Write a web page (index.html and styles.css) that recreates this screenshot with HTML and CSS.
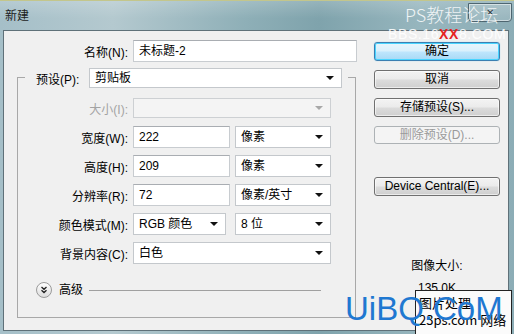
FILE: index.html
```html
<!DOCTYPE html>
<html lang="zh-CN">

<head>
    <meta charset="UTF-8">
    <meta name="viewport" content="width=device-width, initial-scale=1.0">
    <link rel="stylesheet" href="styles.css">
    <title>新建</title>
</head>

<body>
    <div class="window">
        <div class="titlebar">
            <span class="title">新建</span>
            <span class="close">✕</span>
        </div>
        <div class="frame">
            <div class="main">
                <div class="row first">
                    <span class="lbl wide-lbl">名称(N):</span>
                    <div class="input name">未标题-2</div>
                </div>
                <div class="group">
                    <div class="group-head">
                        <span class="head-lbl">预设(P):</span>
                        <div class="select preset">剪贴板</div>
                    </div>
                    <div class="row size">
                        <span class="lbl dim">大小(I):</span>
                        <div class="select disabled full"></div>
                    </div>
                    <div class="row">
                        <span class="lbl">宽度(W):</span>
                        <div class="input num">222</div>
                        <div class="select unit">像素</div>
                    </div>
                    <div class="row">
                        <span class="lbl">高度(H):</span>
                        <div class="input num">209</div>
                        <div class="select unit">像素</div>
                    </div>
                    <div class="row">
                        <span class="lbl">分辨率(R):</span>
                        <div class="input num">72</div>
                        <div class="select unit">像素/英寸</div>
                    </div>
                    <div class="row">
                        <span class="lbl">颜色模式(M):</span>
                        <div class="select mode">RGB 颜色</div>
                        <div class="select unit bits">8 位</div>
                    </div>
                    <div class="row">
                        <span class="lbl">背景内容(C):</span>
                        <div class="select full">白色</div>
                    </div>
                    <div class="advanced">
                        <span class="adv-icon">
                            <svg width="16" height="16" viewBox="0 0 16 16">
                                <defs>
                                    <linearGradient id="g" x1="0" y1="0" x2="0" y2="1">
                                        <stop offset="0" stop-color="#ffffff" />
                                        <stop offset="1" stop-color="#dcdcdc" />
                                    </linearGradient>
                                </defs>
                                <circle cx="8" cy="8" r="7.5" fill="url(#g)" stroke="#9a9a9a" />
                                <path d="M5.5 5 L8 7.3 L10.5 5 M5.5 8.3 L8 10.6 L10.5 8.3" fill="none" stroke="#222" stroke-width="1.3" />
                            </svg>
                        </span>
                        <span class="adv-lbl">高级</span>
                        <span class="adv-line"></span>
                    </div>
                </div>
            </div>
            <div class="side">
                <div class="btn default">确定</div>
                <div class="btn">取消</div>
                <div class="btn">存储预设(S)...</div>
                <div class="btn off">删除预设(D)...</div>
                <div class="btn central">Device Central(E)...</div>
                <div class="img-size">图像大小:</div>
                <div class="img-value">135.0K</div>
            </div>
        </div>

        <div class="wm-ps">PS教程论坛</div>
        <div class="wm-bbs">BBS.16<span class="red">XX</span>8.COM</div>
        <div class="wm-box">图片处理<br>23ps.com 网络</div>
        <div class="wm-uibq">UiBQ.CoM</div>
    </div>
</body>

</html>
```

FILE: styles.css
```css
* {
    margin: 0;
    padding: 0;
    box-sizing: border-box;
}

body {
    font-family: "Liberation Sans", "Noto Sans CJK SC", sans-serif;
    font-size: 12px;
    color: #000;
    overflow: hidden;
}

.window {
    position: relative;
    width: 514px;
    height: 334px;
    overflow: hidden;
    background: linear-gradient(90deg, #a5bfc8 0%, #b4c9cf 22%, #8eafb7 48%, #7fa3ac 62%, #97b6be 82%, #8cadb6 100%);
    border-top: 1px solid #c3c68c;
}

.titlebar {
    height: 29px;
    display: flex;
    justify-content: space-between;
    align-items: flex-start;
    background: linear-gradient(180deg, rgba(255, 255, 255, 0.18), rgba(255, 255, 255, 0) 60%);
}

.title {
    margin: 7px 0 0 5px;
    line-height: 16px;
    color: #1c1c1c;
}

.close {
    width: 44px;
    height: 19px;
    margin: 2px 2px 0 0;
    border: 1px solid #4e6670;
    border-radius: 0 0 4px 4px;
    box-shadow: inset 0 0 0 1px rgba(255, 255, 255, 0.5);
    background: rgba(255, 255, 255, 0.12);
    color: #2c3a40;
    font-size: 10px;
    line-height: 17px;
    text-align: center;
    text-shadow: 0 0 2px #fff;
}

.frame {
    display: flex;
    width: 506px;
    height: 301px;
    margin-left: 3px;
    border: 1px solid #5f7179;
    background: #f0f0f0;
}

.main {
    width: 362px;
    padding-top: 9px;
}

.row {
    display: flex;
    align-items: center;
    height: 22px;
    margin-top: 7px;
}

.row.first {
    margin-top: 0;
}

.lbl {
    width: 110px;
    margin-right: 5px;
    text-align: right;
    white-space: nowrap;
}

.wide-lbl {
    width: 124px;
}

.dim {
    color: #a3a3a3;
}

.input,
.select {
    height: 22px;
    line-height: 20px;
    background: #fff;
    border: 1px solid #c8ccd0;
    border-top-color: #a9adb2;
    padding-left: 5px;
    white-space: nowrap;
}

.select {
    position: relative;
    border-color: #c4c8cc;
}

.select::after {
    content: "";
    position: absolute;
    right: 7px;
    top: 8px;
    border-left: 4px solid transparent;
    border-right: 4px solid transparent;
    border-top: 4px solid #111;
}

.name {
    width: 224px;
}

.group {
    width: 339px;
    margin: 15px 0 0 13px;
    padding-bottom: 19px;
    border: 1px solid #a8a8a8;
}

.group-head {
    display: flex;
    align-items: center;
    height: 20px;
    margin: -10px 7px 0 7px;
    padding: 0 6px 0 11px;
    background: #f0f0f0;
}

.head-lbl {
    width: 49px;
    margin-right: 4px;
    white-space: nowrap;
}

.preset {
    width: 253px;
    height: 20px;
    line-height: 18px;
}

.preset::after {
    top: 7px;
}

.row.size {
    height: 20px;
    margin-top: 10px;
}

.full {
    width: 198px;
}

.disabled {
    height: 20px;
    background: #f4f4f4;
    border-color: #cdd0d3;
}

.disabled::after {
    border-top-color: #a8a8a8;
    top: 7px;
}

.row.size + .row {
    margin-top: 8px;
}

.num {
    width: 97px;
}

.unit {
    width: 96px;
    margin-left: 5px;
}

.mode {
    width: 93px;
}

.bits {
    margin-left: 9px;
}

.advanced {
    display: flex;
    align-items: center;
    height: 16px;
    margin: 18px 0 0 18px;
}

.adv-icon {
    width: 16px;
    height: 16px;
}

.adv-lbl {
    margin-left: 7px;
    line-height: 16px;
}

.adv-line {
    width: 232px;
    height: 1px;
    margin-left: 6px;
    background: #a0a0a0;
}

.side {
    width: 126px;
    margin-left: 8px;
    padding-top: 11px;
    display: flex;
    flex-direction: column;
    align-items: stretch;
}

.btn {
    height: 19px;
    margin-bottom: 9px;
    border: 1px solid #707070;
    border-radius: 3px;
    background: linear-gradient(180deg, #f3f3f3 0%, #ebebeb 48%, #dcdcdc 52%, #cfcfcf 100%);
    box-shadow: inset 0 0 0 1px rgba(255, 255, 255, 0.6);
    text-align: center;
    line-height: 17px;
    white-space: nowrap;
}

.btn.default {
    border-color: #3c7fb1;
    background: linear-gradient(180deg, #e8f5fc 0%, #d9f0fc 48%, #bee6fd 52%, #a7d9f5 100%);
    box-shadow: inset 0 0 0 1px #48d4ff, 0 0 1px #6ec6f0;
}

.btn.off {
    height: 18px;
    line-height: 16px;
    border-color: #adb2b5;
    background: #f4f4f4;
    box-shadow: none;
    color: #9a9a9a;
}

.btn.central {
    margin-top: 24px;
}

.img-size {
    margin-top: 54px;
    line-height: 14px;
    text-align: center;
}

.img-value {
    margin-top: 9px;
    line-height: 12px;
    text-align: center;
}

/* watermarks laid over the dialog */
.wm-ps {
    position: absolute;
    left: 405px;
    top: 2px;
    font-family: "Noto Sans CJK SC", sans-serif;
    font-size: 18px;
    font-weight: 300;
    line-height: 22px;
    color: rgba(255, 255, 255, 0.85);
}

.wm-bbs {
    position: absolute;
    left: 388px;
    top: 25px;
    font-size: 14px;
    line-height: 16px;
    letter-spacing: 0.6px;
    color: rgba(255, 255, 255, 0.9);
}

.red {
    color: #e5231f;
    font-weight: bold;
}

.wm-box {
    position: absolute;
    left: 415px;
    top: 289px;
    width: 97px;
    height: 50px;
    padding: 3px 0 0 3px;
    border: 1px solid #222;
    background: #fbfbfb;
    font-family: "Noto Sans CJK SC", sans-serif;
    font-size: 13px;
    line-height: 17px;
}

.wm-uibq {
    position: absolute;
    left: 345px;
    top: 291px;
    font-size: 33px;
    line-height: 33px;
    color: #1f78d1;
}
```
